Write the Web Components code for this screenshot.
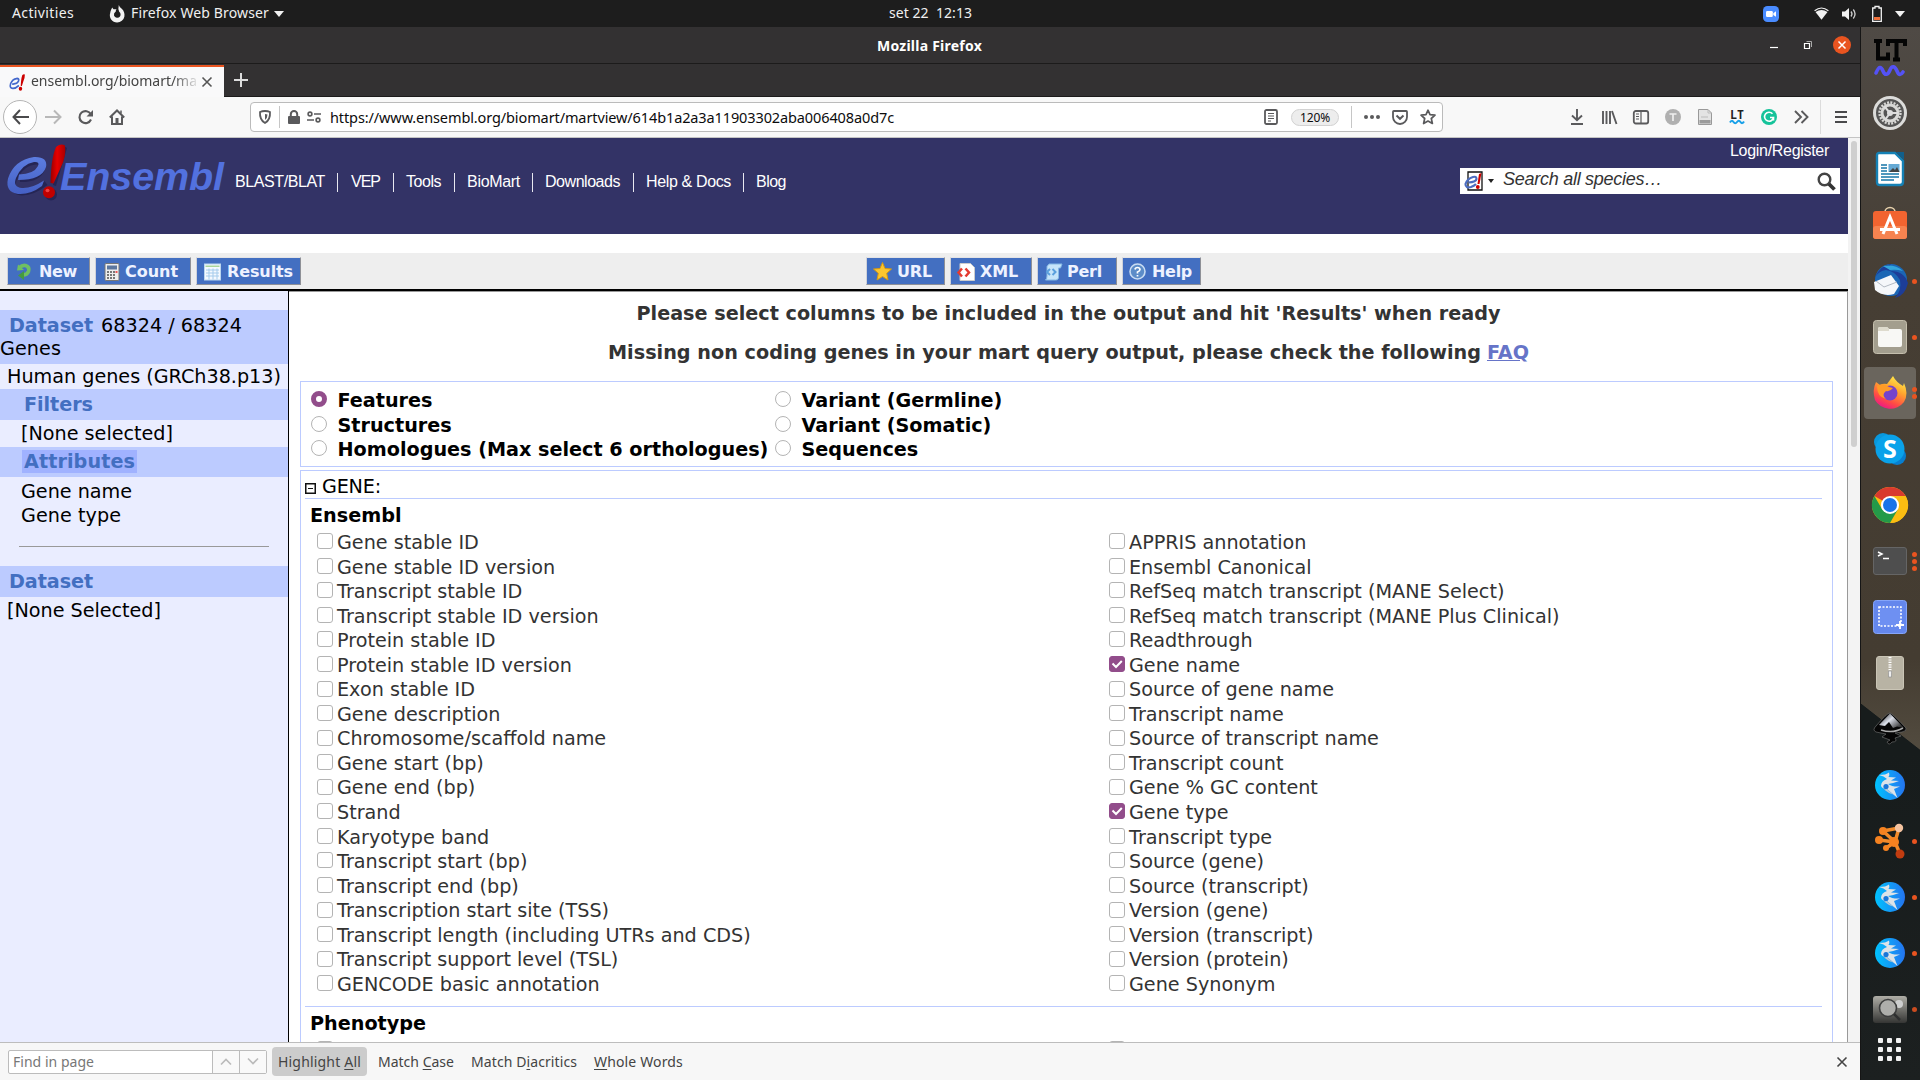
<!DOCTYPE html>
<html lang="en">
<head>
<meta charset="utf-8">
<title>Mozilla Firefox</title>
<style>
html,body{margin:0;padding:0;width:1920px;height:1080px;overflow:hidden;background:#1d1d1d}
body{font-family:"Noto Sans","Open Sans",sans-serif;font-size:14px;color:#333}
</style>
</head>
<body>
<desk-top></desk-top>
<script>
const RESET = '*{box-sizing:border-box}svg{display:block;flex:none;overflow:visible}';
function element(name, css, html) {
  customElements.define(name, class extends HTMLElement {
    constructor() {
      super();
      const t = document.createElement('template');
      t.innerHTML = '<style>' + RESET + css + '</style>' + (typeof html === 'function' ? html(this) : html);
      this.attachShadow({mode: 'open'}).appendChild(t.content.cloneNode(true));
    }
  });
}
// x: gap before the text, w: its drawn width
const T = (w, text, gap = 0, extra = '') => `<fit-text w="${w}" style="margin-left:${gap}px;${extra}">${text}</fit-text>`;

element('desk-top',
  `:host{display:flex;flex-direction:column;width:1920px;height:1080px}
   .row{display:flex;height:1053px}
   .win{width:1860px;display:flex;flex-direction:column;height:1053px}
   .view{display:flex;height:904px;background:#fff;overflow:hidden}
   .page{width:1848px;display:flex;flex-direction:column}
   .cols{display:flex;height:751px;overflow:hidden}
   .sb{width:12px;background:#f3f3f3;padding:3px 3px 0}
   .sb i{display:block;width:6px;height:306px;border-radius:3px;background:#cfcfcf}`,
  `<top-bar></top-bar>
   <div class="row"><div class="win"><title-bar></title-bar><tab-strip></tab-strip><nav-bar></nav-bar>
   <div class="view"><div class="page"><ens-header></ens-header><mart-tools></mart-tools>
   <div class="cols"><mart-side></mart-side><mart-main></mart-main></div></div><div class="sb"><i></i></div></div>
   <find-bar></find-bar></div><app-dock></app-dock></div>`);

element('top-bar',
  `:host{display:flex;align-items:center;height:27px;background:#1d1d1d;color:#f0f0f0;font-size:14px}
   fit-text{padding-bottom:2px}`,
  `${T(62,'Activities',12)}
   <svg width="16" height="18" viewBox="0 0 16 18" style="margin-left:35px"><path d="M8 17.500A7.200 7.200 0 0 1 1.200 8C1.400 5.600 2.500 4.500 3.200 2.500Q4 3.500 4.500 4.200L7.500 4.200Q6.500 5.500 6.800 6.500Q4.500 8 5 10.500A3.500 3.500 0 0 0 11 11.500Q12.500 9 10.200 6.800Q8.800 4 9.800 0Q10.500 2.500 13 4Q16 7 15.400 11.500A7.300 7.300 0 0 1 8 17.500Z" fill="#f2f2f2"/></svg>
   ${T(138,'Firefox Web Browser',6)}
   <svg width="10" height="6" style="margin-left:5px"><path d="M0 0h10l-5 6z" fill="#f2f2f2"/></svg>
   ${T(83,'set 22  12:13',605)}
   <svg width="16" height="16" viewBox="0 0 16 16" style="margin-left:791px"><rect width="16" height="16" rx="4.500" fill="#4a8cff"/><rect x="3" y="5" width="6.800" height="6" rx="1.200" fill="#fff"/><path d="M10.300 7.200L13 5.300V10.800L10.300 9z" fill="#fff"/></svg>
   <svg width="15" height="13" viewBox="0 0 15 13" style="margin-left:35px"><path d="M.6 3.800Q7.500-1.800 14.400 3.800" fill="none" stroke="#f2f2f2" stroke-width="1.200"/><path d="M1.500 5Q7.500.8 13.500 5L7.500 12.700z" fill="#f2f2f2"/></svg>
   <svg width="15" height="14" viewBox="0 0 15 14" style="margin-left:13px"><path d="M0 4.500h3L7 1v12L3 9.500H0z" fill="#f2f2f2"/><path d="M9 4.500q2 2.500 0 5M11.300 2.500q3.500 4.500 0 9" fill="none" stroke="#ccc" stroke-width="1.300"/></svg>
   <svg width="10" height="16" viewBox="0 0 10 16" style="margin-left:15px"><path d="M3 .5h4v1.500h2.300v13.300H.7V2H3z" fill="none" stroke="#f2f2f2" stroke-width="1.300"/><rect x="2" y="11" width="6" height="3" fill="#f0703a"/></svg>
   <svg width="10" height="6" style="margin-left:13px"><path d="M0 0h10l-5 6z" fill="#f2f2f2"/></svg>`);

element('title-bar',
  `:host{display:flex;align-items:center;height:37px;background:#333132;border-bottom:1px solid #1c1b1b;color:#fff;font-weight:700;font-size:14px}
   .x{width:18px;height:18px;border-radius:9px;background:#e95420;margin-left:21px;display:flex;align-items:center;justify-content:center}`,
  `${T(105,'Mozilla Firefox',877)}
   <svg width="8" height="12" style="margin-left:788px"><path d="M0 8.500h8" stroke="#fff" stroke-width="1.200"/></svg>
   <svg width="8" height="9" style="margin-left:26px"><path d="M.5 2.500h5v5h-5z" fill="none" stroke="#fff" stroke-width="1.200"/><path d="M2.500.5h5v5.500" fill="none" stroke="#aaa"/></svg>
   <div class="x"><svg width="8" height="8"><path d="M.5.5l7 7M7.500.5l-7 7" stroke="#fff" stroke-width="1.500"/></svg></div>`);

// Ensembl mark: a calligraphic blue swoosh with a red stroke and ball over its right end
const mark = (w, h, style) => `<svg width="${w}" height="${h}" viewBox="6 6 60 56" preserveAspectRatio="none" style="${style}"><path d="M18 39Q37 40 42 29Q45 20 34 21Q20 22 12 38Q7 53 20 53.500Q31 54 43 44" fill="none" stroke="#4468cc" stroke-width="6"/><path d="M56 9Q62 5 65.500 8Q66 18 60 30L54 46L50 45Q51 20 56 9z" fill="#c00"/><circle cx="49" cy="54.500" r="6.500" fill="#c00"/></svg>`;

element('tab-strip',
  `:host{display:flex;height:33px;background:#333132;box-shadow:inset 0 -1px #1c1b1b}
   .tab{width:224px;background:#f9f9fa;border-top:2px solid #e95420;margin-top:1px;display:flex;align-items:center;color:#444;font-size:14px}
   .clip{width:167px;line-height:20px;margin:-2px 0 0 6px;-webkit-mask-image:linear-gradient(90deg,#000 142px,transparent 169px);mask-image:linear-gradient(90deg,#000 142px,transparent 169px)}`,
  `<div class="tab">${mark(16,17,'margin-left:9px')}
   <div class="clip">${T(166,'ensembl.org/biomart/ma')}</div>
   <svg width="10" height="10" style="margin-left:4px"><path d="M.5.500l9 9M9.500.500l-9 9" stroke="#555" stroke-width="1.600"/></svg></div>
   <svg width="14" height="14" style="margin:9px 0 0 10px"><path d="M7 0v14M0 7h14" stroke="#ddd" stroke-width="2"/></svg>`);

element('nav-bar',
  `:host{display:flex;align-items:center;height:41px;background:#f8f8f8;border-bottom:1px solid #c4c4c4;color:#0c0c0d}
   .back{width:34px;height:34px;border-radius:17px;border:1px solid #b5b5b5;background:#fff;margin-left:3px;display:flex;align-items:center;justify-content:center}
   .url{width:1193px;height:30px;margin-left:125px;border:1px solid #bbb;border-radius:4px;background:#fff;display:flex;align-items:center;font-size:14.500px}
   .v{width:1px;height:22px;background:#c6c6c6}
   .pill{width:48px;height:17px;border-radius:9px;background:#ededed;border:1px solid #d2d2d2;font-size:12px;line-height:15px;display:flex;justify-content:center;margin-left:13px}
   .ic{display:flex;margin-left:118px;gap:0}.ic svg{margin:0 8px}
   svg{color:#5a5a5c}`,
  `<div class="back"><svg width="17" height="16" viewBox="0 0 17 16"><path d="M8 1L1.500 8L8 15M2 8h15" fill="none" stroke="#4a4a4c" stroke-width="2"/></svg></div>
   <svg width="17" height="16" viewBox="0 0 17 16" style="margin-left:8px"><path d="M9 1.500L15.500 8L9 14.500M15 8H0" fill="none" stroke="#b8b8b8" stroke-width="2"/></svg>
   <svg width="15" height="16" viewBox="0 0 15 16" style="margin-left:16px"><path d="M12.800 5.300A6 6 0 1 0 13 10.500" fill="none" stroke="currentColor" stroke-width="2.100"/><path d="M15 1v6.500H8.500z" fill="currentColor"/></svg>
   <svg width="16" height="16" viewBox="0 0 16 16" style="margin-left:16px"><path d="M.8 8.500L8 1.500l7.200 7M3 7.500V15h10V7.500" fill="none" stroke="currentColor" stroke-width="2"/><path d="M6.500 9h3v6h-3z" fill="currentColor"/><path d="M12 1.500v3" stroke="currentColor" stroke-width="1.500"/></svg>
   <div class="url">
    <svg width="12" height="14" viewBox="0 0 12 14" style="margin-left:8px"><path d="M6 1Q9 1 11 2Q11.500 10 6 13Q.5 10 1 2Q3 1 6 1z" fill="none" stroke="currentColor" stroke-width="1.800"/><path d="M6 4v6q2.500-2 2.500-5.500z" fill="currentColor"/></svg>
    <i class="v" style="margin-left:8px"></i>
    <svg width="12" height="14" viewBox="0 0 12 14" style="margin-left:8px"><rect y="6" width="12" height="8" rx="1" fill="currentColor"/><path d="M2.800 7V4.200a3.200 3.200 0 0 1 6.400 0V7" fill="none" stroke="currentColor" stroke-width="2"/></svg>
    <svg width="14" height="12" viewBox="0 0 14 12" style="margin-left:7px"><g fill="none" stroke="currentColor" stroke-width="1.600"><circle cx="3" cy="3" r="1.900"/><circle cx="11" cy="9" r="1.900"/><path d="M7 3h7M0 9h7"/></g></svg>
    ${T(564,'https://www.ensembl.org/biomart/martview/614b1a2a3a11903302aba006408a0d7c',9)}
    <svg width="14" height="16" viewBox="0 0 14 16" style="margin-left:370px"><rect x="1" y="1" width="12" height="14" rx="1.500" fill="none" stroke="currentColor" stroke-width="1.800"/><path d="M4 4.500h6M4 7h6M4 9.500h6M4 12h3" stroke="currentColor" stroke-width="1.100"/></svg>
    <div class="pill">${T(30,'120%')}</div>
    <i class="v" style="margin-left:12px"></i>
    <svg width="16" height="4" style="margin-left:12px"><g fill="currentColor"><circle cx="2" cy="2" r="2"/><circle cx="8" cy="2" r="2"/><circle cx="14" cy="2" r="2"/></g></svg>
    <svg width="16" height="15" viewBox="0 0 16 15" style="margin-left:12px"><path d="M1 1.800Q1 1 1.800 1H14.200Q15 1 15 1.800V7A7 7 0 0 1 1 7z" fill="none" stroke="currentColor" stroke-width="1.800"/><path d="M4.500 5.500L8 8.800L11.500 5.500" fill="none" stroke="currentColor" stroke-width="2"/></svg>
    <svg width="16" height="16" viewBox="0 0 16 16" style="margin-left:12px"><path d="M8 1.200L10 5.600L15 6.200L11.300 9.500L12.400 14.500L8 12L3.600 14.500L4.700 9.500L1 6.200L6 5.600z" fill="none" stroke="currentColor" stroke-width="1.700" stroke-linejoin="round"/></svg>
   </div>
   <div class="ic">
    <svg width="16" height="16" viewBox="0 0 16 16"><path d="M8 0v11M3 6.500L8 11.300L13 6.500M2 15h12" fill="none" stroke="currentColor" stroke-width="1.900"/></svg>
    <svg width="16" height="16" viewBox="0 0 16 16"><path d="M2 2v13M5.500 2v13M9 2v13M11 2l4.500 13" fill="none" stroke="currentColor" stroke-width="1.900"/></svg>
    <svg width="16" height="16" viewBox="0 0 16 16"><rect x=".8" y="2" width="14.400" height="12.500" rx="2" fill="none" stroke="currentColor" stroke-width="1.800"/><path d="M8 2v12.500M3 5h3M3 7.500h3M3 10h3" stroke="currentColor" stroke-width="1.200"/></svg>
    <svg width="16" height="16" viewBox="0 0 16 16"><circle cx="8" cy="8" r="8" fill="#b0b0b0"/><path d="M4.500 5h7M8 5v7" stroke="#eee" stroke-width="1.700"/></svg>
    <svg width="16" height="16" viewBox="0 0 16 16"><path d="M1.500.5H11L14.500 4V15.500H1.500z" fill="#e3e3e3" stroke="#999"/><rect x="2.500" y="11" width="11" height="3.500" fill="#9b9b9b"/><path d="M4 8h7M11 .5V4h3.500" stroke="#bbb" fill="none"/></svg>
    <svg width="16" height="16" viewBox="0 0 16 16"><text x="1" y="10" font-family="DejaVu Sans Mono" font-size="11.500" font-weight="700" textLength="14" fill="#222">LT</text><path d="M1 13.500q1.800-3 3.500-.5t3.500 0t3.500 0t3.500-.5" fill="none" stroke="#18a0e8" stroke-width="2"/></svg>
    <svg width="16" height="16" viewBox="0 0 16 16"><circle cx="8" cy="8" r="8" fill="#15c39a"/><path d="M11.500 4.800A4.500 4.500 0 1 0 12.500 8.500H9M12.500 8.500v3" fill="none" stroke="#fff" stroke-width="1.600"/></svg>
    <svg width="16" height="16" viewBox="0 0 16 16"><path d="M2 2l6 6l-6 6M8.500 2l6 6l-6 6" fill="none" stroke="currentColor" stroke-width="1.900"/></svg>
   </div>
   <i class="v" style="margin-left:3px;height:34px;background:#dcdcdc"></i>
   <svg width="12" height="14" style="margin-left:14px"><path d="M0 2h12M0 7h12M0 12h12" stroke="#4a4a4c" stroke-width="1.900"/></svg>`);

element('ens-header',
  `:host{display:flex;justify-content:space-between;height:96px;background:#336;color:#fff;font:16px "Liberation Sans",sans-serif}
   .l{display:flex}.nav{display:flex;margin:35px 0 0 11px;height:19px;line-height:17px}
   .nav i{width:1px;height:19px;background:#e8e8f0}
   .r{width:380px;margin-right:8px;display:flex;flex-direction:column}
   .log{display:flex;justify-content:flex-end;height:30px;line-height:26px;padding-right:11px}
   .box{background:#fff;height:26px;display:flex;align-items:center;color:#333;font-style:italic;font-size:18px;line-height:22px}`,
  `<div class="l"><svg width="224" height="66" viewBox="0 0 224 66">
    <defs><linearGradient id="r"><stop offset="0" stop-color="#900"/><stop offset=".45" stop-color="#e80000"/><stop offset="1" stop-color="#a00"/></linearGradient>
    <linearGradient id="b" x2="0" y2="1"><stop offset="0" stop-color="#5c7de0"/><stop offset="1" stop-color="#4560c4"/></linearGradient></defs>
    <g transform="translate(2 2)" opacity=".45" fill="#15153f" stroke="#15153f"><path d="M18 39.500Q36 40 40.500 29Q43 21.500 34 22Q20 23 12.500 39Q8 52 20 53Q31 53 44 43" fill="none" stroke-width="5"/><path d="M56 9Q62 5 65 8L54 46L51 45Q51 20 56 9z" stroke="none"/><circle cx="49" cy="54.500" r="6" stroke="none"/></g>
    <path d="M19 36.500Q34 36 38 28Q40 23.500 34 24Q22 26 16 40Q12.500 49 22 50Q32 50.500 44 42.500L42 48Q30 57 18 56Q5 54 8 40.500Q14 22 34 19Q48 18.500 46 29Q42 42 18 42z" fill="url(#b)"/>
    <text x="60" y="52" font-family="Liberation Sans" font-style="italic" font-weight="700" font-size="39.500" textLength="164" fill="#5271df">Ensembl</text>
    <path d="M56 9Q61 5 65 7.500Q66.500 18 61 29L53.500 45.500L50.500 45Q51 20 56 9z" fill="url(#r)"/><circle cx="49" cy="54.300" r="6" fill="#c00000"/><ellipse cx="47.500" cy="52.500" rx="2" ry="1.800" fill="#f04040"/></svg>
    <div class="nav">${T(90,'BLAST/BLAT')}<i style="margin-left:12px"></i>${T(29,'VEP',13)}<i style="margin-left:13px"></i>${T(35,'Tools',12)}<i style="margin-left:13px"></i>${T(53,'BioMart',12)}<i style="margin-left:12px"></i>${T(75,'Downloads',12)}<i style="margin-left:13px"></i>${T(85,'Help &amp; Docs',12)}<i style="margin-left:12px"></i>${T(30,'Blog',12)}</div></div>
   <div class="r"><div class="log">${T(99,'Login/Register')}</div>
   <div class="box"><svg width="19" height="20" viewBox="0 0 19 20" style="margin-left:4px"><path d="M4 1h14v18H4z" fill="#fff" stroke="#111" stroke-width="1.300"/><path d="M4.500 11.500Q12 11 12.500 8Q12.500 5 9 6Q3 8 1.500 13Q1.500 17.500 7 16Q10 15 12 13" fill="none" stroke="#4b6cc0" stroke-width="2.200"/><path d="M15 3l2.500-1l-2 11h-2z" fill="#c00"/><circle cx="13.800" cy="16" r="1.900" fill="#c00"/></svg>
   <svg width="6" height="4" style="margin-left:5px"><path d="M0 0h6L3 4z" fill="#222"/></svg>
   ${T(159,'Search all species…',9,'margin-top:-4px')}
   <svg width="19" height="19" viewBox="0 0 19 19" style="margin-left:155px"><circle cx="7.500" cy="7.500" r="5.800" fill="#fff" stroke="#444" stroke-width="2.400"/><path d="M12 12l5.500 5.500" stroke="#333" stroke-width="3.800"/></svg></div></div>`);

element('mart-button',
  `:host{display:flex;align-items:center;height:28px;padding-top:1px;background:#436fc1;border:1px solid #8e9097;border-top-color:#e4e4e6;border-left-color:#cfd2da;color:#eef2ff;font:700 16px "DejaVu Sans",sans-serif;flex:none}
   ::slotted(svg){display:block;flex:none}`, `<slot></slot>`);

element('mart-tools',
  `:host{display:block;height:57px;padding-top:19px;background:#fff}
   .bar{display:flex;height:38px;background:#eee;border-bottom:2px solid #000;padding-top:4px}
   svg{margin-left:8px}`,
  `<div class="bar">
   <mart-button style="width:83px;margin-left:7px"><svg width="17" height="17" viewBox="0 0 17 17"><path d="M3.500 4.500Q6 2 9.500 2.500Q14 4 12.500 8.500Q11 12 7 12" fill="none" stroke="#6fbf62" stroke-width="3.600"/><path d="M8 8v9L2 12.500z" fill="#459a40"/><path d="M1 7.500L2 1.500L8 7z" fill="#6fbf62"/></svg>${T(38,'New',6)}</mart-button>
   <mart-button style="width:96px;margin-left:5px"><svg width="16" height="18" viewBox="0 0 16 18"><rect x="1" y=".5" width="14" height="17" rx="1" fill="#eee" stroke="#777"/><rect x="3" y="2.500" width="10" height="4" fill="#5c779f"/><path d="M3 9h2m1 0h2m1 0h2M3 12h2m1 0h2m1 0h2M3 15h2m1 0h2m1 0h2" stroke="#777" stroke-width="2"/><path d="M11.500 9h2" stroke="#e55" stroke-width="2"/></svg>${T(53,'Count',5)}</mart-button>
   <mart-button style="width:105px;margin-left:5px"><svg width="17" height="18" viewBox="0 0 17 17" style="margin-left:7px"><rect x=".5" y=".5" width="16" height="16" fill="#f4f9ff" stroke="#bcd7ef"/><rect x="1.500" y="2" width="14" height="1.500" fill="#a8d59b"/><path d="M2 6.500h13M2 9.500h13M2 12.500h13M5 5v11M9 5v11M13 5v11" stroke="#a4cbec"/></svg>${T(66,'Results',6)}</mart-button>
   <mart-button style="width:79px;margin-left:565px"><svg width="19" height="19" viewBox="0 0 19 19" style="margin-left:6px"><path d="M9.500.5L12 6.500L18.500 7L13.700 11.300L15 18L9.500 14.500L4 18L5.300 11.300L.5 7L7 6.500z" fill="#fcc62f" stroke="#d99a10"/></svg>${T(35,'URL',5)}</mart-button>
   <mart-button style="width:82px;margin-left:5px"><svg width="18" height="18" viewBox="0 0 18 18" style="margin-left:6px"><path d="M3 .5h10.500l4 4V17.500H3z" fill="#fff" stroke="#ccc"/><path d="M5 5.500L1.500 9.500L5 13.500M8.500 5.500l3.500 4L8.500 13.500" fill="none" stroke="#e43a30" stroke-width="2.500"/></svg>${T(38,'XML',5)}</mart-button>
   <mart-button style="width:80px;margin-left:5px"><svg width="19" height="18" viewBox="0 0 19 18" style="margin-left:6px"><path d="M5 1h13l-1.500 4h-2V15q-1 2.500-3 2H1.500Q3 16 3 13V3.500z" fill="#c6e4fa" stroke="#86b9e4"/><path d="M6 6L3 9l3 3M8.500 6l3 3L8.500 12" fill="none" stroke="#5a9fdd" stroke-width="2"/></svg>${T(35,'Perl',4)}</mart-button>
   <mart-button style="width:79px;margin-left:5px"><svg width="17" height="17" viewBox="0 0 17 17" style="margin-left:6px"><circle cx="8.500" cy="8.500" r="7.500" fill="#5c8cc8" stroke="#c9dcf2" stroke-width="1.600"/><path d="M6 6.500Q6.300 4.500 8.500 4.500T11 6.500Q11 8 8.500 9V10.500M8.500 12v1.500" fill="none" stroke="#fff" stroke-width="1.700"/></svg>${T(40,'Help',6)}</mart-button>
   </div>`);

element('mart-side',
  `:host{display:block;width:289px;height:751px;flex:none;background:#eaedff;border-right:1px solid #000;padding-top:19px;color:#000;font:19.200px "DejaVu Sans",sans-serif}
   .b{background:#bccbff}.f{display:flex}
   b{color:#436fc1}
   .hl{background:#a0b2ff;margin-left:22px;width:115px;height:23px;line-height:24px;display:flex;padding-left:2px}
   hr{border:0;height:1px;background:#999;margin:18px 19px 19px}`,
  `<div class="b" style="height:54px;line-height:23px;padding-top:4px"><div class="f"><b>${T(84,'Dataset',9)}</b>${T(141,'68324 / 68324',8)}</div><div class="f">${T(61,'Genes')}</div></div>
   <div class="f" style="height:25px;line-height:25px">${T(274,'Human genes (GRCh38.p13)',7)}</div>
   <div class="b f" style="height:31px;line-height:31px"><b>${T(69,'Filters',24)}</b></div>
   <div class="f" style="height:27px;line-height:27px">${T(152,'[None selected]',21)}</div>
   <div class="b" style="height:30px;padding-top:3px"><div class="hl"><b>${T(111,'Attributes')}</b></div></div>
   <div class="f" style="height:27px;line-height:24px;padding-top:3px">${T(111,'Gene name',21)}</div>
   <div class="f" style="height:24px;line-height:24px">${T(100,'Gene type',21)}</div>
   <hr>
   <div class="b f" style="height:31px;line-height:32px"><b>${T(84,'Dataset',9)}</b></div>
   <div class="f" style="height:27px;line-height:27px">${T(154,'[None Selected]',7)}</div>`);

element('attr-check',
  `:host{display:flex;height:24.560px;line-height:24.560px;white-space:nowrap;color:#333}
   i{flex:none;width:16px;height:16px;margin:2.300px 4px 0 0;border:1px solid #b4b4b4;border-radius:3px;background:#fff}
   :host([checked]) i{background:#924d8b;border-color:#924d8b}
   svg{display:none}:host([checked]) svg{display:block}`,
  `<i><svg width="14" height="14"><path d="M2.500 6.500L6 10L11.800 4" fill="none" stroke="#fff" stroke-width="2"/></svg></i><slot></slot>`);

element('attr-radio',
  `:host{display:flex;height:24.560px;line-height:24.560px;white-space:nowrap;color:#000;font-weight:700}
   i{flex:none;width:16px;height:16px;margin:2px 10.500px 0 0;border:1px solid #b4b4b4;border-radius:8px;background:#fff}
   :host([checked]) i{border:5.500px solid #924d8b}`,
  `<i></i><slot></slot>`);

const left = ['Gene stable ID','Gene stable ID version','Transcript stable ID','Transcript stable ID version','Protein stable ID','Protein stable ID version','Exon stable ID','Gene description','Chromosome/scaffold name','Gene start (bp)','Gene end (bp)','Strand','Karyotype band','Transcript start (bp)','Transcript end (bp)','Transcription start site (TSS)','Transcript length (including UTRs and CDS)','Transcript support level (TSL)','GENCODE basic annotation'];
const right = ['APPRIS annotation','Ensembl Canonical','RefSeq match transcript (MANE Select)','RefSeq match transcript (MANE Plus Clinical)','Readthrough','*Gene name','Source of gene name','Transcript name','Source of transcript name','Transcript count','Gene % GC content','*Gene type','Transcript type','Source (gene)','Source (transcript)','Version (gene)','Version (transcript)','Version (protein)','Gene Synonym'];
const checks = a => a.map(s => s[0] === '*' ? `<attr-check checked>${s.slice(1)}</attr-check>` : `<attr-check>${s}</attr-check>`).join('');

element('mart-main',
  `:host{display:block;width:1559px;height:751px;background:#fff;border-top:1px solid #999;border-right:1px solid #999;font:19.200px "DejaVu Sans",sans-serif;color:#333;overflow:hidden}
   .h{display:flex;justify-content:center;font-weight:700;padding-left:1px}
   .types{margin:0 14px 0 11px;height:86px;border:1px solid #bccbff;display:flex;padding:7px 0 0 10px}
   .types div{width:464px}
   .attrs{margin:3px 14px 0 11px;height:700px;border:1px solid #bccbff;padding:0 10px 0 4px;color:#000}
   .g{display:flex;height:28px;border-bottom:1px solid #bccbff;line-height:31px}
   .g svg{margin:12px 6px 0 0}
   .s{font-weight:700;padding-left:5px;height:32px;line-height:33px}
   .two{display:flex;padding-left:12px;height:476px;border-bottom:1px solid #bccbff}
   .two>div{width:792px;flex:none}
   a{color:#6674c8}`,
  `<div class="h" style="height:42px;line-height:44px">${T(864,"Please select columns to be included in the output and hit 'Results' when ready")}</div>
   <div class="h" style="height:47px;line-height:38px">${T(873,'Missing non coding genes in your mart query output, please check the following')}<a>${T(42,'FAQ',6,'text-decoration:underline')}</a></div>
   <div class="types"><div><attr-radio checked>Features</attr-radio><attr-radio>Structures</attr-radio><attr-radio>Homologues (Max select 6 orthologues)</attr-radio></div>
   <div><attr-radio>Variant (Germline)</attr-radio><attr-radio>Variant (Somatic)</attr-radio><attr-radio>Sequences</attr-radio></div></div>
   <div class="attrs"><div class="g"><svg width="11" height="11"><path d="M.75.75h9.500v9.500H.75z" fill="#fff" stroke="#111" stroke-width="1.500"/><path d="M3 5.500h5" stroke="#111"/></svg>${T(59,'GENE:')}</div>
   <div class="s">Ensembl</div>
   <div class="two"><div>${checks(left)}</div><div>${checks(right)}</div></div>
   <div class="s">Phenotype</div>
   <div class="two"><div><attr-check></attr-check></div><div><attr-check></attr-check></div></div></div>`);

element('find-bar',
  `:host{display:flex;align-items:center;height:38px;background:#f7f7f7;border-top:1px solid #bdbdbd;color:#444;font-size:14px;line-height:20px;flex:none}
   .in{display:flex;height:24px;width:259px;margin-left:8px;border:1px solid #bcbcbc;border-radius:2px;background:#fff;align-items:center;color:#777}
   .n{width:27px;height:22px;border-left:1px solid #bcbcbc;background:#f9f9f9;display:flex;align-items:center;justify-content:center}
   .hi{width:95px;height:29px;border-radius:4px;background:#ccc;margin-left:5px;display:flex;align-items:center}
   u{text-underline-offset:2px}`,
  `<div class="in">${T(81,'Find in page',4)}<span style="flex:1"></span><div class="n"><svg width="12" height="7"><path d="M1 6.500l5-5l5 5" fill="none" stroke="#bbb" stroke-width="1.700"/></svg></div><div class="n"><svg width="12" height="7"><path d="M1 .5l5 5l5-5" fill="none" stroke="#bbb" stroke-width="1.700"/></svg></div></div>
   <div class="hi">${T(83,'Highlight <u>A</u>ll',6)}</div>${T(76,'Match <u>C</u>ase',11)}${T(106,'Match D<u>i</u>acritics',17)}${T(89,'<u>W</u>hole Words',17)}
   <svg width="10" height="10" style="margin-left:1154px"><path d="M.5.5l9 9M9.500.5l-9 9" stroke="#444" stroke-width="1.600"/></svg>`);

element('dock-item',
  `:host{display:grid;grid-template-columns:48px 7px;align-items:center;height:56px;padding-left:5px;flex:none}
   .c{height:52px;width:52px;margin-left:-2px;border-radius:4px;display:flex;align-items:center;justify-content:center}
   :host([active]) .c{background:#6a655d}
   .d{display:flex;flex-direction:column;gap:2px;margin-left:-2px;z-index:1}
   .d i{width:5px;height:5px;border-radius:3px;background:#e95420}`,
  el => `<div class="c"><slot></slot></div><div class="d">${'<i></i>'.repeat(+el.getAttribute('dots') || 0)}</div>`);

const bird = '<svg width="32" height="32" viewBox="0 0 32 32"><circle cx="16" cy="16" r="15" fill="url(#k)"/><path d="M5 6Q12 6 15 3.500Q16 6 14.500 8L22 8.500L17 11.500L25 12Q19 14.500 14 15Q18 18 26 17.500L20 20L23.500 29L13 20Q8 20 7 17Q7 12 13 10Q10 7 5 6z" fill="#dce3e8"/><circle cx="12" cy="17.500" r="2.600" fill="#1976d8"/><path d="M10 20.500L13 20L19 25.500L15 24z" fill="#b9c6d0"/><defs><linearGradient id="k"><stop offset="0" stop-color="#00c3ff"/><stop offset="1" stop-color="#2474ef"/></linearGradient></defs></svg>';
element('app-dock',
  `:host{display:flex;flex-direction:column;width:60px;height:1053px;padding-top:2px;border-left:1px solid #151515;background:linear-gradient(218deg,transparent 0,transparent 49%,#171c1c 50%) 0 677px/60px 47px no-repeat,linear-gradient(#171c1c,#1c2020) 0 724px/60px 329px no-repeat,linear-gradient(#4f4a45,#463e34 25%,#443c31 60%,#514a3e 68%)}
   .grid{display:grid;grid-template-columns:repeat(3,5px);gap:4px;margin:1px 0 0 17px}
   .grid i{width:5px;height:5px;border-radius:1px;background:#f2f2f2}`,
  `<dock-item><svg width="34" height="38" viewBox="0 0 34 38"><path d="M1 3h8M5 2v18.500h10v-6M15 8V3H32V8M23.500 3v19M20 21.500h7" fill="none" stroke="#050505" stroke-width="4"/><path d="M3 35c3-7 5-7 7-2s5 4 7-1s5-4 7 1s4 4 6 1" fill="none" stroke="#5452f6" stroke-width="3.600" stroke-linecap="round"/></svg></dock-item>
   <dock-item><svg width="34" height="34" viewBox="0 0 34 34"><circle cx="17" cy="17" r="15.500" fill="#555" stroke="#dcdcda" stroke-width="3"/><circle cx="17" cy="17" r="10.500" fill="none" stroke="#d8d8d6" stroke-width="2.400" stroke-dasharray="2 1.300"/><circle cx="17" cy="17" r="8" fill="none" stroke="#d8d8d6" stroke-width="3"/><circle cx="17" cy="17" r="3" fill="#ddd"/><path d="M17 17L11 10M17 17h8M17 17l-5 7" stroke="#ddd" stroke-width="2"/></svg></dock-item>
   <dock-item><svg width="28" height="34" viewBox="0 0 28 34"><path d="M3 1h16l8 8v21q0 3-3 3H4q-3 0-3-3V3q0-2 2-2z" fill="#fff" stroke="#1581b5" stroke-width="2.400"/><path d="M20 0h8v8z" fill="#115f8b"/><path d="M5 13h6M5 16h6M5 19h6M5 22h18M5 25h18M5 28h13" stroke="#1675a8" stroke-width="1.400"/><rect x="12.500" y="12" width="11" height="8" fill="#65a9d4"/><path d="M13 20l4-4l2 2l2-3l2.500 5z" fill="#444"/></svg></dock-item>
   <dock-item><svg width="34" height="34" viewBox="0 0 34 34"><path d="M12 6V4a5 4.500 0 0 1 10 0v2" fill="none" stroke="#e8d2ad" stroke-width="1.600"/><rect x="0" y="3" width="34" height="28" rx="3" fill="#f26430"/><rect x="0" y="18" width="34" height="13" rx="3" fill="#f68350"/><path d="M10 26L17 9l7 17M7 21.500h20" fill="none" stroke="#fff" stroke-width="3"/></svg></dock-item>
   <dock-item dots="1"><svg width="38" height="36" viewBox="0 0 38 36"><circle cx="20" cy="17" r="16" fill="#1b66b5"/><path d="M4 14Q10 2 20 1Q15 6 20 8Q33 8 37 20Q34 33 24 35Q31 27 29 17Q24 8 15 7Q8 8 4 14z" fill="#1d3d98"/><path d="M12 3Q24 1 32 8Q25 6 19 7z" fill="#33a6dc"/><path d="M3 19L20 12L28 23L23 31Q12 34 4 27z" fill="#f5f7fa"/><path d="M5 18L13 24L26 19" fill="none" stroke="#b2b9c2"/></svg></dock-item>
   <dock-item dots="1"><svg width="34" height="34" viewBox="0 0 34 34"><rect x=".5" y=".5" width="33" height="33" rx="3" fill="#a39e8e" stroke="#c5bfad"/><path d="M5 9q0-2 2-2h7l2 2h11q2 0 2 2v14q0 2-2 2H7q-2 0-2-2z" fill="#f8f8f5"/><path d="M5 11V9q0-2 2-2h7l2 2v2z" fill="#dedbcd"/></svg></dock-item>
   <dock-item dots="2" active><svg width="34" height="36" viewBox="0 0 34 36"><defs><linearGradient id="fx" x1=".8" y1="0" x2=".3" y2="1"><stop offset="0" stop-color="#fff44f"/><stop offset=".4" stop-color="#ffa52e"/><stop offset=".75" stop-color="#ff4a45"/><stop offset="1" stop-color="#ec158a"/></linearGradient></defs><path d="M3 7L7 10Q10 8 14 9Q17 5 20 1Q23 7 30 11L31 8Q36 19 31 27A17 16 0 0 1 2 25Q-1 15 3 7z" fill="url(#fx)"/><circle cx="17" cy="18" r="7.500" fill="#7543cb"/><path d="M4 11Q10 7 16 12L20 13Q17 17 13 16Q8 20 13 24Q4 22 4 11z" fill="#ff9b27"/></svg></dock-item>
   <dock-item><svg width="32" height="32" viewBox="0 0 32 32"><circle cx="9" cy="9" r="9" fill="#0998dd"/><circle cx="23" cy="23" r="9" fill="#087fd0"/><circle cx="16" cy="16" r="14.500" fill="#0aa2ea"/><text x="16" y="25" text-anchor="middle" font-family="Open Sans" font-weight="700" font-size="25" fill="#fff">S</text></svg></dock-item>
   <dock-item><svg width="36" height="36" viewBox="0 0 36 36"><circle cx="18" cy="18" r="18" fill="#fbbd12"/><path d="M18 18L2.400 9A18 18 0 0 1 33.600 9z" fill="#d93a2f"/><path d="M18 9H33.600A18 18 0 0 1 18 36L25.800 22.500z" fill="#fbbd12"/><path d="M2.400 9A18 18 0 0 0 18 36L25.800 22.500L10.200 22.500z" fill="#249a49"/><circle cx="18" cy="18" r="9" fill="#fff"/><circle cx="18" cy="18" r="7" fill="#1a73e8"/></svg></dock-item>
   <dock-item dots="3"><svg width="34" height="28" viewBox="0 0 34 28"><rect x=".5" y=".5" width="33" height="27" rx="2.500" fill="#4e4e4e" stroke="#656565"/><path d="M5 5l4 2l-4 2M10 11.500h6" fill="none" stroke="#fff" stroke-width="1.500"/></svg></dock-item>
   <dock-item><svg width="34" height="34" viewBox="0 0 34 34"><rect x=".5" y=".5" width="33" height="33" rx="3" fill="#6487ed" stroke="#85a5fa"/><path d="M6 7h22v19H6z" fill="#6e90f2" stroke="#fff" stroke-width="1.600" stroke-dasharray="2 1.500"/><path d="M27 21v8M23 25h8" stroke="#fff" stroke-width="1.800"/></svg></dock-item>
   <dock-item><svg width="28" height="34" viewBox="0 0 28 34"><rect x=".5" y=".5" width="27" height="33" rx="2.500" fill="#b8b3a4" stroke="#cac5b6"/><path d="M14 1v16" stroke="#fff" stroke-width="3" stroke-dasharray="1.200 1.200"/><path d="M12.500 15h3v6h-3z" fill="#eee" stroke="#888" stroke-width=".6"/></svg></dock-item>
   <dock-item><svg width="34" height="34" viewBox="0 0 34 34"><defs><linearGradient id="ik" x2="1" y2=".7"><stop offset="0" stop-color="#111"/><stop offset=".5" stop-color="#dce0ea"/><stop offset="1" stop-color="#333"/></linearGradient></defs><path d="M17 1Q19 1 33 16Q34 19 29 20L22 21L28 24L22 26Q25 30 19 30Q16 34 14 30L17 28L9 25L13 22L3 20Q-1 18 3 14Q14 1 17 1z" fill="#050505" stroke="#777" stroke-width=".6"/><path d="M17 1.500L31 16L24 14.500L20 16L16 10L12 14L6 13z" fill="url(#ik)"/><path d="M8 18Q20 22 30 16" stroke="#aaa" stroke-width="1.500" fill="none"/></svg></dock-item>
   <dock-item>${bird}</dock-item>
   <dock-item dots="1"><svg width="32" height="36" viewBox="0 0 32 36"><g stroke="#f18a2a" stroke-width="3.500"><path d="M9 8L25 5M9 8L21 19M25 5L21 19M5 17L21 19M12 25L21 19M21 19L26 31"/></g><g fill="#f58220"><circle cx="9" cy="8" r="4"/><circle cx="5" cy="17" r="4"/><circle cx="12" cy="25" r="3"/><circle cx="20" cy="19" r="5"/></g><circle cx="25" cy="5" r="4.200" fill="#f4c3a0"/><circle cx="26" cy="31" r="4.500" fill="#c13c10"/></svg></dock-item>
   <dock-item dots="1">${bird}</dock-item><dock-item dots="1">${bird}</dock-item>
   <dock-item dots="1" style="opacity:.85"><svg width="34" height="27" viewBox="0 0 34 27"><defs><linearGradient id="mg" x2="0" y2="1"><stop offset="0" stop-color="#c9c7be"/><stop offset="1" stop-color="#3a3a38"/></linearGradient></defs><rect width="34" height="27" rx="3" fill="url(#mg)"/><circle cx="26" cy="8" r="4" fill="#eee"/><circle cx="15" cy="12" r="8.500" fill="#c8c8c4" stroke="#444" stroke-width="1.600"/><path d="M21 18l6 6" stroke="#333" stroke-width="2.500"/></svg></dock-item>
   <div class="grid">${'<i></i>'.repeat(9)}</div>`);

// Text run with a set width: letter spacing takes up the difference from the natural width.
customElements.define('fit-text', class extends HTMLElement {
  constructor() {
    super();
    this.attachShadow({mode: 'open'}).innerHTML = '<style>:host{display:inline-block;flex:none;white-space:pre}</style><slot></slot>';
  }
  connectedCallback() {
    const want = +this.getAttribute('w');
    const has = this.getBoundingClientRect().width;
    const n = this.textContent.length;
    if (want && has) this.style.letterSpacing = ((want - has) / n).toFixed(3) + 'px';
  }
});
</script>
</body>
</html>
